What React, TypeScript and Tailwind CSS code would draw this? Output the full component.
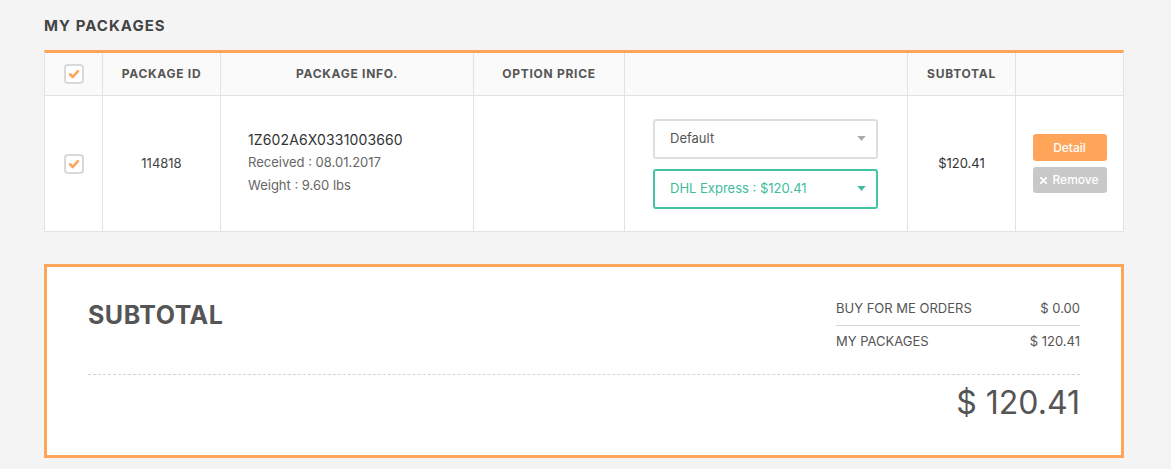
import React from "react";

const cell = "border-r border-[#e2e2e2]";
const th = "text-[12px] font-bold text-[#555] tracking-[0.06em] uppercase";

function Check() {
  return (
    <span className="inline-flex items-center justify-center w-[20px] h-[20px] rounded-[4px] border-2 border-[#d9d9d9] bg-white">
      <svg viewBox="0 0 12 12" className="w-[12px] h-[12px]">
        <path d="M2 6.3 4.8 9 10 3.2" fill="none" stroke="#ffa55a" strokeWidth="2.6" strokeLinecap="round" strokeLinejoin="round" />
      </svg>
    </span>
  );
}

function Select({ label, active }: { label: string; active?: boolean }) {
  return (
    <div
      className={`flex items-center justify-between h-[40px] pl-[15px] pr-[10px] rounded-[3px] border-2 bg-white text-[13px] ${
        active ? "border-[#43c4a4] text-[#3dbd9c]" : "border-[#dedede] text-[#555]"
      }`}
    >
      <span>{label}</span>
      <svg viewBox="0 0 10 6" className="w-[9px] h-[5px]">
        <path d="M0 0h10L5 6z" fill={active ? "#3dbd9c" : "#aaa"} />
      </svg>
    </div>
  );
}

export default function App() {
  return (
    <div className="min-h-[469px] bg-[#f4f4f4] pl-[44px] pt-[14px] text-[#444]" style={{ fontFamily: "Inter, 'Noto Sans', sans-serif" }}>
      <div className="w-[1080px]">
        <h2 className="text-[15px] font-bold text-[#444] tracking-[0.07em] leading-[22px] pt-[1px]">MY PACKAGES</h2>

        <div className="mt-[13px] border-t-[3px] border-[#ffa55a] border-x border-b border-x-[#e2e2e2] border-b-[#e2e2e2]">
          <div className="flex h-[43px] bg-[#fafafa] border-b border-[#e2e2e2]">
            <div className={`w-[58px] flex items-center justify-center ${cell}`}><Check /></div>
            <div className={`w-[118px] flex items-center justify-center ${cell} ${th}`}>Package ID</div>
            <div className={`w-[253px] flex items-center justify-center ${cell} ${th}`}>Package Info.</div>
            <div className={`w-[151px] flex items-center justify-center ${cell} ${th}`}>Option Price</div>
            <div className={`w-[283px] ${cell}`} />
            <div className={`w-[108px] flex items-center justify-center ${cell} ${th}`}>Subtotal</div>
            <div className="flex-1" />
          </div>

          <div className="flex h-[135px] bg-white">
            <div className={`w-[58px] flex items-center justify-center ${cell}`}><Check /></div>
            <div className={`w-[118px] flex items-center justify-center text-[13px] text-[#444] ${cell}`}>114818</div>
            <div className={`w-[253px] flex flex-col justify-center pl-[27px] pb-[3px] ${cell}`}>
              <p className="text-[14px] text-[#333] leading-[23px] tracking-[0.01em]">1Z602A6X0331003660</p>
              <p className="text-[13px] text-[#666] leading-[23px]">Received : 08.01.2017</p>
              <p className="text-[13px] text-[#666] leading-[23px]">Weight : 9.60 lbs</p>
            </div>
            <div className={`w-[151px] ${cell}`} />
            <div className={`w-[283px] flex flex-col justify-center gap-[10px] pl-[28px] pr-[29px] ${cell}`}>
              <Select label="Default" />
              <Select label="DHL Express : $120.41" active />
            </div>
            <div className={`w-[108px] flex items-center justify-center text-[13px] text-[#333] ${cell}`}>$120.41</div>
            <div className="flex-1 flex flex-col items-center justify-center gap-[6px]">
              <button className="w-[74px] h-[27px] rounded-[3px] bg-[#ffa55a] text-white text-[12px] font-medium">Detail</button>
              <button className="w-[74px] h-[26px] rounded-[3px] bg-[#c8c8c8] text-white text-[12px] font-medium flex items-center justify-center gap-[5px]">
                <svg viewBox="0 0 8 8" className="w-[7px] h-[7px]">
                  <path d="M1 1l6 6M7 1 1 7" stroke="#fff" strokeWidth="2" strokeLinecap="round" />
                </svg>
                Remove
              </button>
            </div>
          </div>
        </div>

        <div className="mt-[32px] h-[194px] border-[3px] border-[#ffa55a] bg-white px-[41px] pt-[30px]">
          <div className="flex justify-between">
            <h3 className="text-[25px] font-bold text-[#555] tracking-[0.02em] leading-[36px]">SUBTOTAL</h3>
            <div className="w-[244px] text-[13px] text-[#555] mt-[2px]">
              <div className="flex justify-between pb-[6px] border-b border-[#d6d6d6]">
                <span>BUY FOR ME ORDERS</span>
                <span>$ 0.00</span>
              </div>
              <div className="flex justify-between pt-[6px]">
                <span>MY PACKAGES</span>
                <span>$ 120.41</span>
              </div>
            </div>
          </div>
          <div className="mt-[23px] border-t border-dashed border-[#d4d4d4]" />
          <div className="text-right text-[32px] text-[#555] leading-[48px] mt-[4px]">$ 120.41</div>
        </div>
      </div>
    </div>
  );
}
